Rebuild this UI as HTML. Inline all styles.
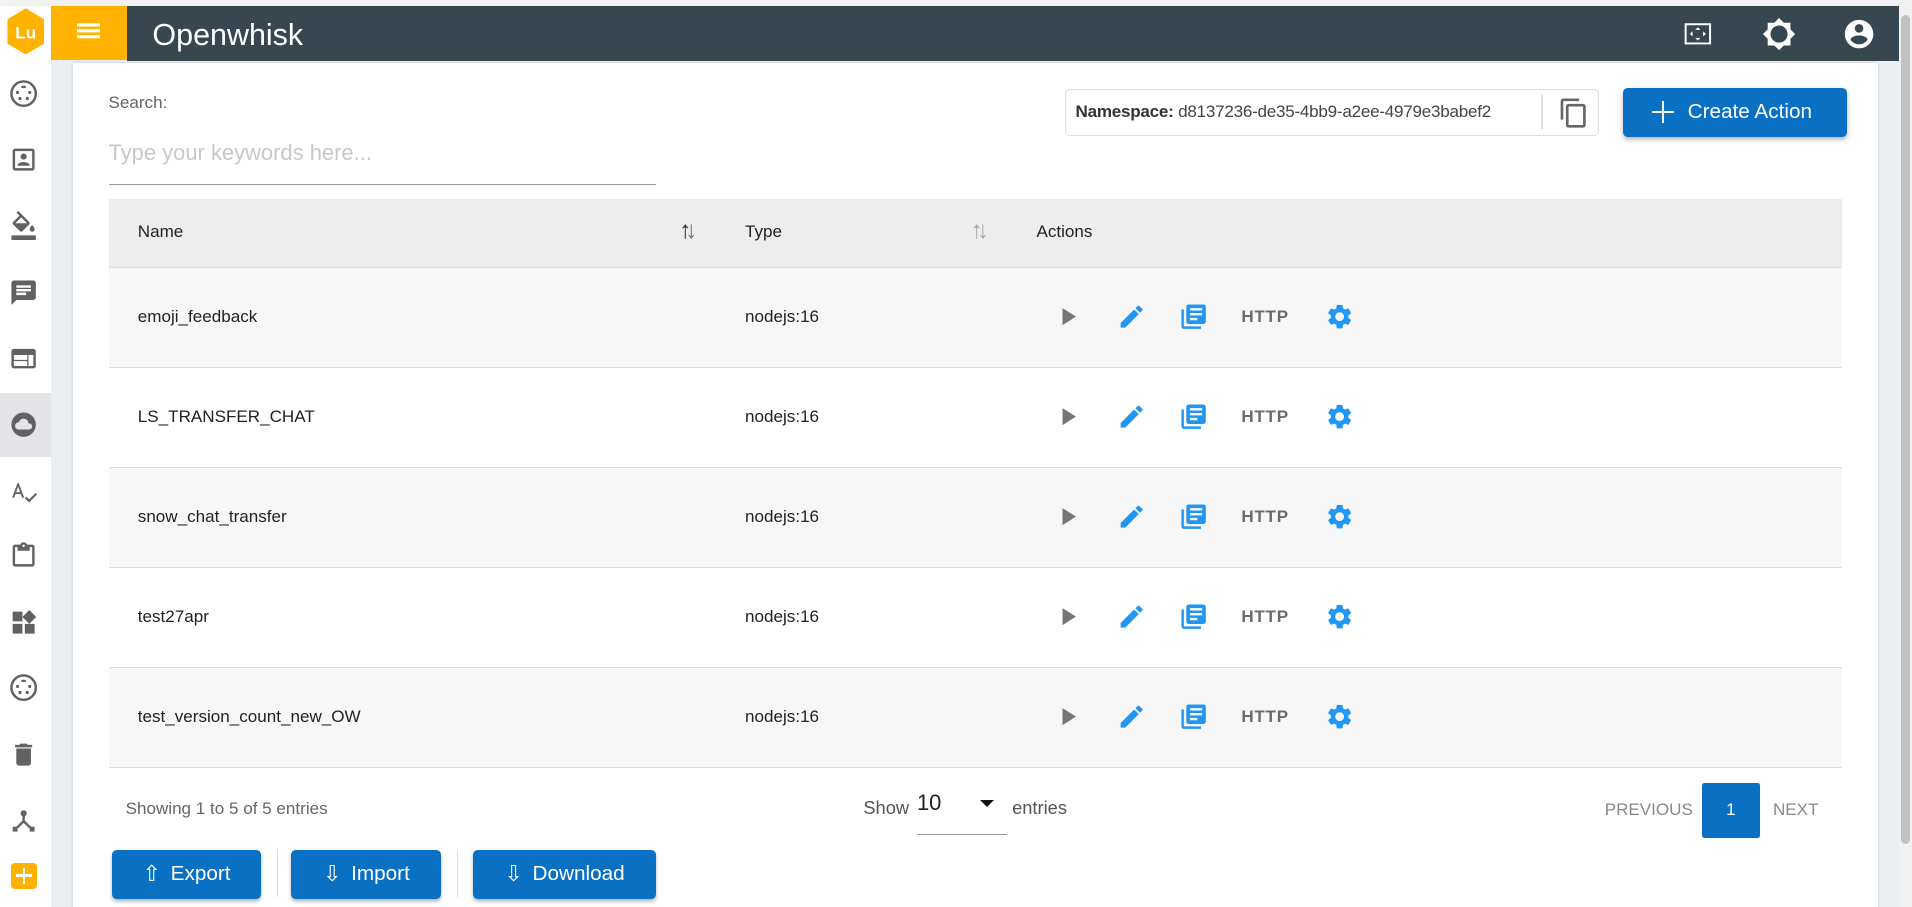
<!DOCTYPE html>
<html><head><meta charset="utf-8">
<style>
html,body{margin:0;padding:0;overflow:hidden}
body{width:1912px;height:907px;background:#eceff1;font-family:"Liberation Sans",sans-serif}
#w{zoom:1.21939;position:relative;width:1568px;height:744px;overflow:hidden;background:#eceff1}
.a{position:absolute}
.si{position:absolute;left:7px;width:24px;height:24px;fill:#616161}
.t{position:absolute;font-size:14px;color:#222}
.ic{position:absolute;width:24px;height:24px}
.btn{position:absolute;background:#0a70c4;color:#fff;border-radius:4px;box-shadow:0 2px 3px rgba(0,0,0,.3);font-size:17px;display:flex;align-items:center;justify-content:center;gap:8px;top:697px;height:40px}
</style></head><body><div id="w">
<div class="a" style="left:0;top:0;width:1568px;height:5px;background:#f1f1f1"></div>
<div class="a" style="left:0;top:5px;width:42px;height:739px;background:#fff"></div>
<svg class="a" style="left:4px;top:6px" width="34" height="40" viewBox="0 0 34 40"><polygon points="17,1 32,10 32,30 17,39 2,30 2,10" fill="#ffb300"/><text x="17" y="26" font-size="14" font-weight="bold" fill="#fff" text-anchor="middle" font-family="Liberation Sans">Lu</text></svg>
<div class="a" style="left:42px;top:5px;width:62px;height:44px;background:#ffb300"></div>
<div class="a" style="left:63px;top:19px;width:19px;height:3px;background:#fff;box-shadow:0 6px 0 #fff,0 12px 0 #fff;transform:scaleY(.8)"></div>
<div class="a" style="left:104px;top:5px;width:1453px;height:45px;background:#37474f"></div>
<div class="a" style="left:125px;top:15px;font-size:25px;color:#fff">Openwhisk</div>
<svg class="a" style="left:1379px;top:15px" width="26" height="26" viewBox="0 0 24 24" fill="#fff"><path d="M2 4h20v16H2zM3.5 5.5v13h17v-13z"/><path d="M12 7l2 2h-4zM12 17l-2-2h4zM6 12l2-2v4zM18 12l-2 2v-4z"/></svg>
<svg class="a" style="left:1445px;top:14px" width="28" height="28" viewBox="0 0 24 24" fill="#fff"><path d="M20 8.69V4h-4.69L12 .69 8.69 4H4v4.69L.69 12 4 15.31V20h4.69L12 23.31 15.31 20H20v-4.69L23.31 12 20 8.69zM12 18c-3.31 0-6-2.69-6-6s2.69-6 6-6 6 2.69 6 6-2.69 6-6 6z"/></svg>
<svg class="a" style="left:1511px;top:14px" width="28" height="28" viewBox="0 0 24 24" fill="#fff"><path d="M12 2C6.48 2 2 6.48 2 12s4.48 10 10 10 10-4.480 10-10S17.52 2 12 2zm0 3c1.66 0 3 1.34 3 3s-1.34 3-3 3-3-1.34-3-3 1.34-3 3-3zm0 14.2c-2.5 0-4.71-1.28-6-3.22.03-1.99 4-3.08 6-3.08 1.99 0 5.97 1.09 6 3.08-1.290 1.94-3.5 3.22-6 3.22z"/></svg>
<div class="a" style="left:1557px;top:5px;width:11px;height:739px;background:#f1f1f1"></div>
<div class="a" style="left:1559px;top:12px;width:7px;height:680px;background:#c1c1c1;border-radius:4px"></div>
<div class="a" style="left:0;top:322px;width:42px;height:53px;background:#e4e4e8"></div>
<svg class="si" style="top:65px" viewBox="0 0 24 24"><circle cx="12" cy="12" r="10" fill="none" stroke="#616161" stroke-width="2"/><rect x="10" y="5.5" width="4" height="2" rx="1"/><circle cx="7" cy="11" r="1.3"/><circle cx="17" cy="11" r="1.3"/><circle cx="9" cy="16" r="1.3"/><circle cx="15" cy="16" r="1.3"/></svg>
<svg class="si" style="top:119px" viewBox="0 0 24 24"><path d="M19 3H5a2 2 0 00-2 2v14a2 2 0 002 2h14a2 2 0 002-2V5a2 2 0 00-2-2zm0 16H5V5h14v14zM12 12a2.5 2.5 0 100-5 2.5 2.5 0 000 5zm5 4.5c0-1.7-3.3-2.5-5-2.5s-5 .8-5 2.5V17h10v-.5z"/></svg>
<svg class="si" style="top:173px" viewBox="0 0 24 24"><path d="M16.56 8.94L7.62 0 6.21 1.41l2.38 2.38-5.15 5.15a1.49 1.49 0 000 2.12l5.5 5.5c.29.29.68.44 1.06.44s.77-.15 1.06-.44l5.5-5.5c.59-.58.59-1.530 0-2.12zM5.21 10L10 5.21 14.79 10H5.21zM19 11.5s-2 2.17-2 3.5c0 1.1.9 2 2 2s2-.9 2-2c0-1.33-2-3.5-2-3.5zM2 20h20v4H2v-4z"/></svg>
<svg class="si" style="top:228px" viewBox="0 0 24 24"><path d="M20 2H4c-1.1 0-2 .9-2 2v18l4-4h14c1.1 0 2-.9 2-2V4c0-1.1-.9-2-2-2zM6 9h12v2H6V9zm8 5H6v-2h8v2zm4-6H6V6h12v2z"/></svg>
<svg class="si" style="top:282px" viewBox="0 0 24 24"><path d="M20 4H4a2 2 0 00-2 2v12a2 2 0 002 2h16a2 2 0 002-2V6a2 2 0 00-2-2zm-5 14H4v-4h11v4zm0-5H4V9h11v4zm5 5h-4V9h4v9z"/></svg>
<svg class="si" style="top:336px" viewBox="0 0 24 24"><path d="M12 2a10 10 0 100 20 10 10 0 000-20zm4.5 14H8c-1.66 0-3-1.34-3-3s1.34-3 3-3h.14A4 4 0 0116 11h.5a2.5 2.5 0 010 5z"/></svg>
<svg class="si" style="top:391px" viewBox="0 0 24 24"><path d="M2.5 17L7 5h1l4.5 12h-1.7l-1.1-3H5.3l-1.1 3H2.5zm3.3-4.5h3.4L7.5 7.8 5.8 12.5zM13 17.5l1.3-1.3 2.2 2.2 5.3-5.3 1.2 1.3-6.5 6.5z"/></svg>
<svg class="si" style="top:444px" viewBox="0 0 24 24"><path d="M19 3h-4.18C14.4 1.84 13.3 1 12 1s-2.4.84-2.82 2H5a2 2 0 00-2 2v14a2 2 0 002 2h14a2 2 0 002-2V5a2 2 0 00-2-2zm-7 0a1 1 0 110 2 1 1 0 010-2zm7 16H5V5h2v3h10V5h2v14z"/></svg>
<svg class="si" style="top:499px" viewBox="0 0 24 24"><path d="M13 13v8h8v-8h-8zM3 21h8v-8H3v8zM3 3v8h8V3H3zm13.66-1.31L11 7.34 16.66 13l5.66-5.66-5.66-5.65z"/></svg>
<svg class="si" style="top:552px" viewBox="0 0 24 24"><circle cx="12" cy="12" r="10" fill="none" stroke="#616161" stroke-width="2"/><rect x="10" y="5.5" width="4" height="2" rx="1"/><circle cx="7" cy="11" r="1.3"/><circle cx="17" cy="11" r="1.3"/><circle cx="9" cy="16" r="1.3"/><circle cx="15" cy="16" r="1.3"/></svg>
<svg class="si" style="top:607px" viewBox="0 0 24 24"><path d="M6 19a2 2 0 002 2h8a2 2 0 002-2V7H6v12zM19 4h-3.5l-1-1h-5l-1 1H5v2h14V4z"/></svg>
<svg class="si" style="top:661px" viewBox="0 0 24 24"><circle cx="12" cy="6" r="2.5"/><path d="M11 8h2v4l5 5-1.4 1.4L12 13.8l-4.6 4.6L6 17l5-5z"/><rect x="3" y="17" width="4" height="4"/><rect x="17" y="17" width="4" height="4"/></svg>
<div class="a" style="left:9px;top:708px;width:21px;height:21px;background:#ffb300;border-radius:3px"></div>
<div class="a" style="left:13px;top:717px;width:13px;height:2px;background:#fff"></div>
<div class="a" style="left:18.5px;top:712px;width:2px;height:13px;background:#fff"></div>
<div class="a" style="left:60px;top:52px;width:1480px;height:700px;background:#fff;box-shadow:0 0 3px rgba(0,0,0,.15)"></div>
<div class="a" style="left:89px;top:76px;font-size:14px;color:#666">Search:</div>
<div class="a" style="left:89px;top:115px;font-size:18px;color:#c8c8c8">Type your keywords here...</div>
<div class="a" style="left:89px;top:151px;width:449px;height:1px;background:#999"></div>
<div class="a" style="left:873px;top:73px;width:437px;height:37px;border:1px solid #ddd;border-radius:4px"></div>
<div class="a" style="left:882px;top:84px;font-size:14px;color:#444;letter-spacing:-.2px"><b style="color:#333">Namespace:</b> d8137236-de35-4bb9-a2ee-4979e3babef2</div>
<div class="a" style="left:1264px;top:78px;width:1px;height:28px;background:#ddd"></div>
<svg class="a" style="left:1278px;top:79px" width="26" height="28" viewBox="0 0 24 24" fill="#666"><path d="M16 1H4a2 2 0 00-2 2v14h2V3h12V1zm3 4H8a2 2 0 00-2 2v14a2 2 0 002 2h11a2 2 0 002-2V7a2 2 0 00-2-2zm0 16H8V7h11v14z"/></svg>
<div class="a" style="left:1331px;top:72px;width:184px;height:40px;background:#0a70c4;border-radius:4px;box-shadow:0 2px 4px rgba(0,0,0,.3);color:#fff;font-size:17px;line-height:40px"><span style="position:absolute;left:24px;top:19px;width:18px;height:2px;background:#fff"></span><span style="position:absolute;left:32px;top:11px;width:2px;height:18px;background:#fff"></span><span style="position:absolute;left:53px">Create Action</span></div>
<div class="a" style="left:89px;top:163px;width:1422px;height:56px;background:#ededed;border-bottom:1px solid #ddd"></div>
<div class="t" style="left:113px;top:182px">Name</div>
<div class="a" style="left:557px;top:178px;font-size:20px;color:#333">↑<span style="color:#777;margin-left:-5px">↓</span></div>
<div class="t" style="left:611px;top:182px">Type</div>
<div class="a" style="left:796px;top:178px;font-size:20px;color:#aaa">↑<span style="margin-left:-5px">↓</span></div>
<div class="t" style="left:850px;top:182px">Actions</div>
<div id="rows"></div>
<div class="a" style="left:103px;top:655px;font-size:14px;color:#666">Showing 1 to 5 of 5 entries</div>
<div class="a" style="left:708px;top:654px;font-size:15px;color:#555">Show</div>
<div class="a" style="left:752px;top:648px;font-size:18px;color:#222">10</div>
<div class="a" style="left:804px;top:656px;width:0;height:0;border-left:6px solid transparent;border-right:6px solid transparent;border-top:6px solid #111"></div>
<div class="a" style="left:752px;top:684px;width:74px;height:1px;background:#999"></div>
<div class="a" style="left:830px;top:654px;font-size:15px;color:#555">entries</div>
<div class="a" style="left:1316px;top:656px;font-size:14px;color:#888">PREVIOUS</div>
<div class="a" style="left:1396px;top:642px;width:47px;height:45px;background:#0a70c4;border-radius:2px;color:#fff;font-size:14px;text-align:center;line-height:45px">1</div>
<div class="a" style="left:1454px;top:656px;font-size:14px;color:#888">NEXT</div>
<div class="btn" style="left:92px;width:122px"><span style="font-size:18px">⇧</span>Export</div>
<div class="a" style="left:227px;top:696px;width:1px;height:40px;background:#ddd"></div>
<div class="btn" style="left:239px;width:123px"><span style="font-size:18px">⇩</span>Import</div>
<div class="a" style="left:375px;top:696px;width:1px;height:40px;background:#ddd"></div>
<div class="btn" style="left:388px;width:150px"><span style="font-size:18px">⇩</span>Download</div>
</div>
<script>
var names=["emoji_feedback","LS_TRANSFER_CHAT","snow_chat_transfer","test27apr","test_version_count_new_OW"];
var h="";
names.forEach(function(n,i){var y=220+i*82,c=y+40;
h+='<div class="a" style="left:89px;top:'+y+'px;width:1422px;height:81px;background:'+(i%2?'#fff':'#f7f7f7')+';border-bottom:1px solid #ddd"></div>';
h+='<div class="t" style="left:113px;top:'+(c-8)+'px">'+n+'</div><div class="t" style="left:611px;top:'+(c-8)+'px">nodejs:16</div>';
h+='<svg class="ic" style="left:864px;top:'+(c-12)+'px" viewBox="0 0 24 24" fill="#757575"><path d="M8 5v14l11-7z" transform="translate(-1,0)"/></svg>';
h+='<svg class="ic" style="left:916px;top:'+(c-12)+'px" viewBox="0 0 24 24" fill="#2196f3"><path d="M3 17.25V21h3.75L17.81 9.94l-3.75-3.75L3 17.25zM20.71 7.04a1 1 0 000-1.41l-2.34-2.34a1 1 0 00-1.41 0l-1.83 1.83 3.75 3.75 1.83-1.83z"/></svg>';
h+='<svg class="ic" style="left:967px;top:'+(c-12)+'px" viewBox="0 0 24 24" fill="#2196f3"><path d="M4 6H2v14c0 1.1.9 2 2 2h14v-2H4V6zm16-4H8c-1.1 0-2 .9-2 2v12c0 1.1.9 2 2 2h12c1.1 0 2-.9 2-2V4c0-1.1-.9-2-2-2zm-1 9H9V9h10v2zm-4 4H9v-2h6v2zm4-8H9V5h10v2z"/></svg>';
h+='<div class="a" style="left:1018px;top:'+(c-8)+'px;font-size:14px;font-weight:bold;color:#6b6b6b;letter-spacing:.6px">HTTP</div>';
h+='<svg class="ic" style="left:1087px;top:'+(c-12)+'px" viewBox="0 0 24 24" fill="#2196f3"><path d="M19.14 12.94c.04-.3.06-.61.06-.94 0-.32-.02-.64-.07-.94l2.03-1.58a.49.49 0 00.12-.61l-1.92-3.32a.488.488 0 00-.59-.22l-2.39.96c-.5-.38-1.03-.7-1.62-.94l-.36-2.54a.484.484 0 00-.48-.41h-3.84c-.24 0-.43.17-.47.41l-.36 2.54c-.59.24-1.13.57-1.62.94l-2.39-.96c-.22-.08-.47 0-.59.22L2.74 8.87c-.12.21-.08.47.12.61l2.03 1.58c-.05.3-.09.63-.09.94s.02.64.07.94l-2.03 1.58a.49.49 0 00-.12.61l1.92 3.32c.12.22.37.29.59.22l2.39-.96c.5.38 1.03.7 1.62.94l.36 2.54c.05.24.24.41.48.41h3.84c.24 0 .44-.17.47-.41l.36-2.54c.59-.24 1.13-.56 1.62-.94l2.39.96c.22.08.47 0 .59-.22l1.92-3.32c.12-.22.07-.47-.12-.61l-2.01-1.58zM12 15.6c-1.98 0-3.6-1.62-3.6-3.6s1.62-3.6 3.6-3.6 3.6 1.62 3.6 3.6-1.62 3.6-3.6 3.6z"/></svg>';
});
document.getElementById("rows").outerHTML=h;
</script>
</body></html>
